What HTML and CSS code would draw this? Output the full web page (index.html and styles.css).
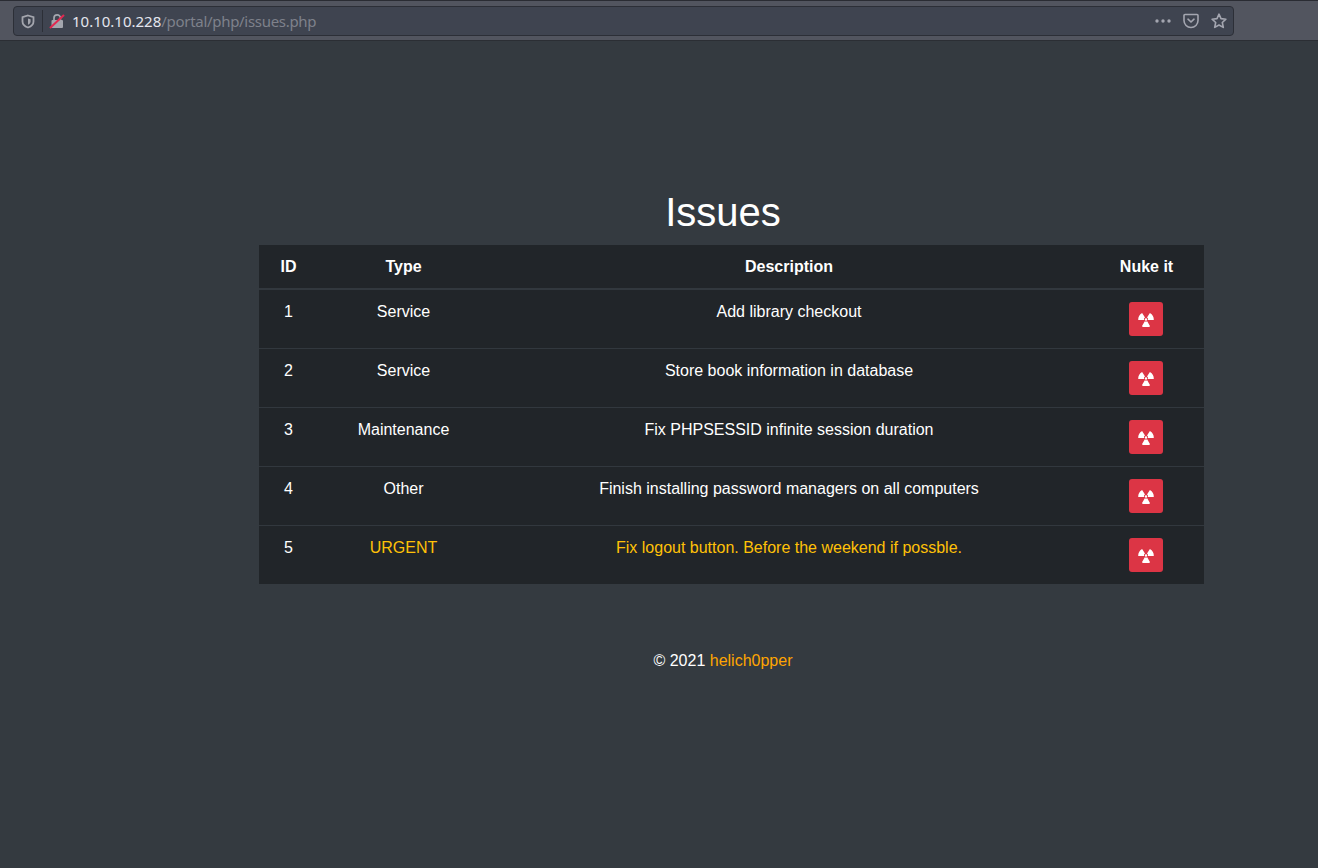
FILE: index.html
```html
<!DOCTYPE html>
<html>
<head>
  <meta charset="utf-8" />
  <title>Issues</title>
  <link rel="stylesheet" href="styles.css">
</head>
<body>
  <div class="toolbar">
    <div class="urlbar">
      <span class="tracking">
        <svg width="14" height="15" viewBox="0 0 14 14"><path d="M7 1 L12.5 2.6 V7 C12.5 10 10 12 7 13 C4 12 1.5 10 1.5 7 V2.6 Z" fill="none" stroke="#a4a6ae" stroke-width="1.8"/><path d="M7 4 L9.6 4.8 V7 C9.6 8.5 8.4 9.6 7 10.2 Z" fill="#a4a6ae"/></svg>
      </span>
      <span class="lock">
        <svg width="16" height="16" viewBox="0 0 16 16"><path d="M5 7 V5 A3.2 3.2 0 0 1 11.4 5 V7" fill="none" stroke="#a4a6ae" stroke-width="1.7"/><rect x="2.5" y="7" width="11.5" height="8" rx="1" fill="#a4a6ae"/><path d="M1 15 L15 2" stroke="#e22850" stroke-width="2"/></svg>
      </span>
      <span class="url"><span class="host">10.10.10.228</span><span class="path">/portal/php/issues.php</span></span>
      <span class="actions">
        <svg width="18" height="16" viewBox="0 0 18 16"><circle cx="3" cy="8" r="1.7" fill="#a4a6b0"/><circle cx="9" cy="8" r="1.7" fill="#a4a6b0"/><circle cx="15" cy="8" r="1.7" fill="#a4a6b0"/></svg>
        <svg width="16" height="16" viewBox="0 0 16 16"><path d="M2 1.5 H14 A1 1 0 0 1 15 2.5 V7.5 A7 7 0 0 1 1 7.5 V2.5 A1 1 0 0 1 2 1.5 Z" fill="none" stroke="#a4a6b0" stroke-width="1.6"/><path d="M5 6.2 L8 9 L11 6.2" fill="none" stroke="#a4a6b0" stroke-width="1.6" stroke-linecap="round"/></svg>
        <svg class="star" width="16" height="16" viewBox="0 0 16 16"><path d="M8 1.2 L10 5.6 L14.9 6.2 L11.3 9.5 L12.3 14.4 L8 12 L3.7 14.4 L4.7 9.5 L1.1 6.2 L6 5.6 Z" fill="none" stroke="#a4a6b0" stroke-width="1.6" stroke-linejoin="round"/></svg>
      </span>
    </div>
  </div>

  <div class="content">
    <h1 class="title">Issues</h1>
    <table class="issues">
      <colgroup>
        <col class="col-id"><col class="col-type"><col class="col-desc"><col class="col-nuke">
      </colgroup>
      <thead>
        <tr><th>ID</th><th>Type</th><th>Description</th><th>Nuke it</th></tr>
      </thead>
      <tbody>
        <tr>
          <td>1</td><td>Service</td><td>Add library checkout</td>
          <td class="action"><button class="nuke"><svg width="16" height="16" viewBox="0 0 16 16"><use href="#radiation"/></svg></button></td>
        </tr>
        <tr>
          <td>2</td><td>Service</td><td>Store book information in database</td>
          <td class="action"><button class="nuke"><svg width="16" height="16" viewBox="0 0 16 16"><use href="#radiation"/></svg></button></td>
        </tr>
        <tr>
          <td>3</td><td>Maintenance</td><td>Fix PHPSESSID infinite session duration</td>
          <td class="action"><button class="nuke"><svg width="16" height="16" viewBox="0 0 16 16"><use href="#radiation"/></svg></button></td>
        </tr>
        <tr>
          <td>4</td><td>Other</td><td>Finish installing password managers on all computers</td>
          <td class="action"><button class="nuke"><svg width="16" height="16" viewBox="0 0 16 16"><use href="#radiation"/></svg></button></td>
        </tr>
        <tr>
          <td>5</td><td class="urgent">URGENT</td><td class="urgent">Fix logout button. Before the weekend if possble.</td>
          <td class="action"><button class="nuke"><svg width="16" height="16" viewBox="0 0 16 16"><use href="#radiation"/></svg></button></td>
        </tr>
      </tbody>
    </table>
    <p class="footer">© 2021 <span class="author">helich0pper</span></p>
  </div>

  <svg class="defs" width="0" height="0">
    <symbol id="radiation" viewBox="0 0 16 16">
      <circle cx="8" cy="8.5" r="1.2" fill="#fff"/>
      <path d="M0.2 9 A7.8 7.8 0 0 1 4.1 2 L7 6.6 A2 2 0 0 0 6 9 Z" fill="#fff"/>
      <path d="M15.8 9 A7.8 7.8 0 0 0 11.9 2 L9 6.6 A2 2 0 0 1 10 9 Z" fill="#fff"/>
      <path d="M3.9 15.3 A7.8 7.8 0 0 0 12.1 15.3 L9.2 10.2 A2 2 0 0 1 6.8 10.2 Z" fill="#fff"/>
    </symbol>
  </svg>
</body>
</html>
```

FILE: styles.css
```css
html, body {
  margin: 0;
  height: 100%;
}
body {
  background: #343a40;
  color: #fff;
  font-family: "Liberation Sans", Arial, sans-serif;
  font-size: 16px;
  line-height: 1.5;
  overflow: hidden;
}
.defs {
  display: block;
}

/* browser bar */
.toolbar {
  height: 41px;
  box-sizing: border-box;
  padding: 5px 84px 0 13px;
  background: #52555f;
  border-top: 1px solid #2a2c33;
  border-bottom: 1px solid #2b2e34;
}
.urlbar {
  height: 30px;
  box-sizing: border-box;
  display: flex;
  align-items: center;
  background: #3f4450;
  border: 1px solid #2c2f37;
  border-radius: 4px;
  font-family: "Noto Sans", "Open Sans", sans-serif;
  font-size: 15px;
  color: #7e818b;
}
.tracking {
  width: 29px;
  height: 22px;
  box-sizing: border-box;
  border-right: 1px solid #2c2f37;
  display: flex;
  align-items: center;
  justify-content: center;
}
.tracking svg, .lock svg, .actions svg {
  display: block;
}
.lock {
  margin: 0 7px 0 6px;
}
.host {
  color: #e4e6ee;
}
.path {
  letter-spacing: -0.3px;
}
.url {
  white-space: nowrap;
}
.actions {
  margin-left: auto;
  padding-right: 6px;
  display: flex;
  align-items: center;
  gap: 11px;
}
.star {
  margin-left: 1px;
}

/* page */
.content {
  width: 945px;
  margin-left: 259px;
  padding-top: 147px;
}
.title {
  margin: 0 0 9px;
  padding-right: 17px;
  font-size: 40px;
  font-weight: 400;
  line-height: 48px;
  text-align: center;
}
.issues {
  width: 945px;
  table-layout: fixed;
  border-collapse: collapse;
  background: #212529;
}
.col-id { width: 59px; }
.col-type { width: 171px; }
.col-desc { width: 600px; }
.col-nuke { width: 115px; }
.issues th, .issues td {
  padding: 10px 12px 11px;
  text-align: center;
  vertical-align: top;
  border-top: 1px solid #32383e;
}
.issues .action {
  padding: 12px 13px 12px 12px;
}
.issues th {
  padding: 10px 12px 9px;
  vertical-align: bottom;
  border-top: 0;
  border-bottom: 2px solid #32383e;
}
.issues thead + tbody tr:first-child td {
  border-top: 0;
}
.urgent {
  color: #ffc107;
}
.nuke {
  width: 34px;
  height: 34px;
  padding: 0;
  border: 0;
  border-radius: 3px;
  background: #dc3545;
  display: inline-flex;
  align-items: center;
  justify-content: center;
  vertical-align: top;
}
.footer {
  margin: 65px 0 0;
  padding-right: 17px;
  text-align: center;
}
.author {
  color: orange;
}
```
